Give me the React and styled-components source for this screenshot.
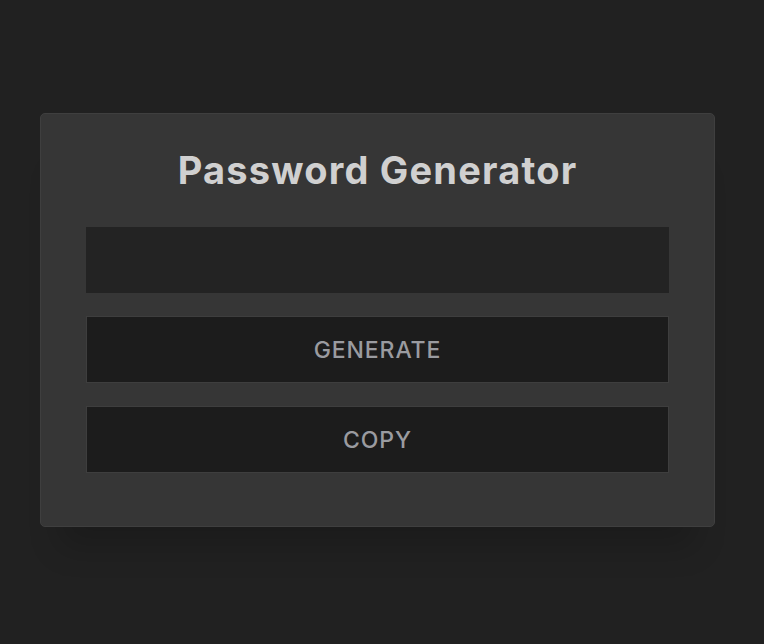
import React from "react";
import styled, { createGlobalStyle } from "styled-components";

const GlobalStyle = createGlobalStyle`
  html, body {
    margin: 0;
    padding: 0;
    background: #212121;
    font-family: "Inter", "Open Sans", sans-serif;
  }
`;

const Page = styled.div`
  min-height: 644px;
  padding: 113px 50px 0 40px;
  box-sizing: border-box;
  background: #212121;
`;

const Card = styled.div`
  width: 675px;
  height: 414px;
  box-sizing: border-box;
  background: #363636;
  border: 1px solid #3f3f3f;
  border-radius: 5px;
  padding: 34px 45px 0 45px;
  display: flex;
  flex-direction: column;
  gap: 23px;
  box-shadow: 0 40px 30px -20px rgba(0, 0, 0, 0.18);
`;

const Title = styled.h1`
  margin: 0 0 12px 0;
  text-align: center;
  font-size: 38px;
  font-weight: 700;
  color: #d0d0d0;
  line-height: 44px;
  letter-spacing: 1.2px;
`;

const Output = styled.input`
  height: 66px;
  width: 100%;
  box-sizing: border-box;
  background: #232323;
  border: none;
  outline: none;
  color: #d0d0d0;
  font-size: 20px;
  padding: 0 16px;
`;

const Button = styled.button`
  height: 67px;
  width: 100%;
  box-sizing: border-box;
  background: #1c1c1c;
  border: 1px solid #3e3e3e;
  color: #9a9ba0;
  font-family: "Inter", "Open Sans", sans-serif;
  font-size: 23px;
  font-weight: 500;
  letter-spacing: 0.9px;
  cursor: pointer;
`;

export default function App() {
  return (
    <>
      <GlobalStyle />
      <Page>
        <Card>
          <Title>Password Generator</Title>
          <Output type="text" readOnly />
          <Button>GENERATE</Button>
          <Button>COPY</Button>
        </Card>
      </Page>
    </>
  );
}
